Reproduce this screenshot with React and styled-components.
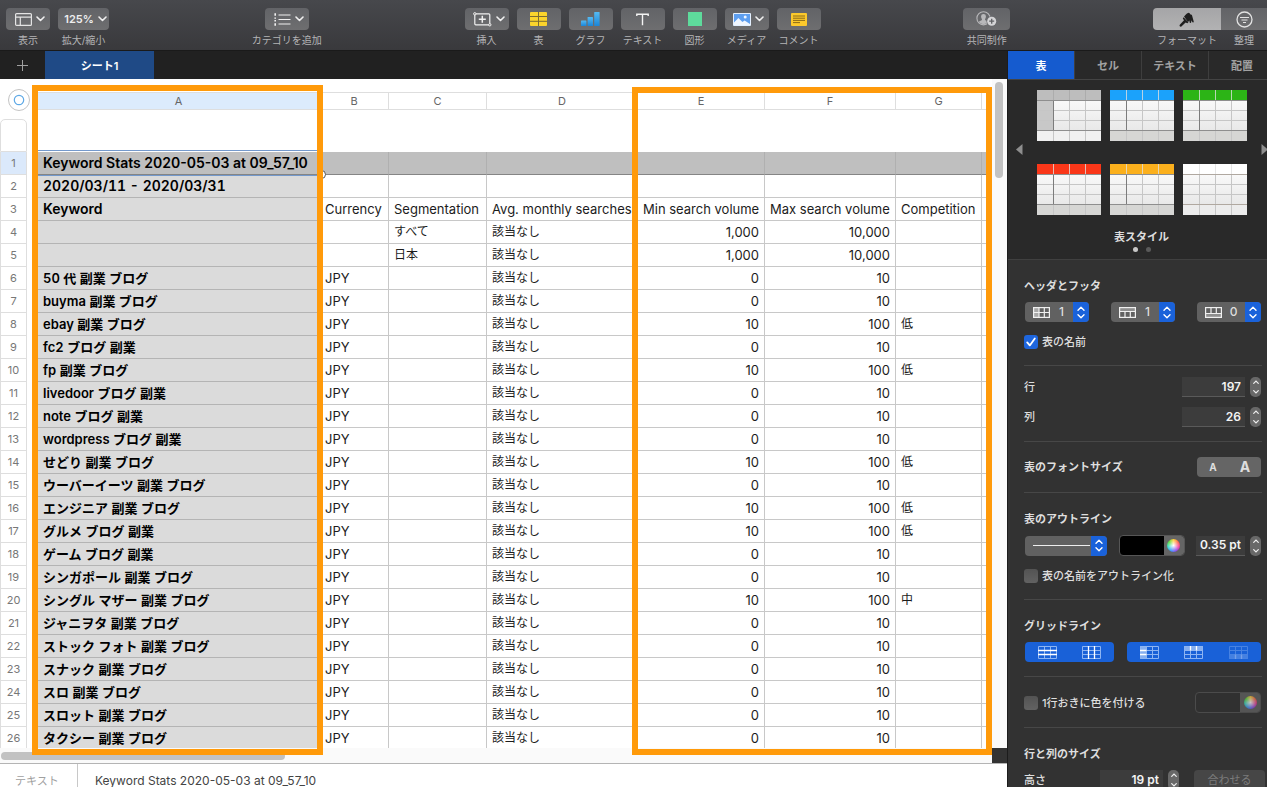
import React from 'react'
import styled, { createGlobalStyle, css } from 'styled-components'

const GlobalStyle = createGlobalStyle`
  * {
    box-sizing: border-box;
  }
  body {
    margin: 0;
    overflow: hidden;
    background: #ffffff;
    font-family: Inter, "Noto Sans CJK JP", sans-serif;
    font-size: 12px;
  }
  button, input, select {
    margin: 0;
    padding: 0;
    border: none;
    border-radius: 0;
    outline: none;
    background: none;
    color: inherit;
    font: inherit;
  }
  svg {
    display: block;
    flex-shrink: 0;
  }
`;

const Page = styled.div`
  display: flex;
  flex-direction: column;
  height: 100vh;
  overflow: hidden;
`;

/* toolbar */

const Toolbar = styled.header`
  display: flex;
  justify-content: space-between;
  align-items: flex-start;
  flex-shrink: 0;
  height: 51px;
  padding: 8px 0 0 6px;
  background: linear-gradient(#47484c, #39393c);
  border-bottom: 1px solid #1a1a1a;
`;

const ToolGroup = styled.div`
  display: flex;
  gap: ${props => props.$gap ?? 8}px;
`;

const ToolItem = styled.label`
  display: flex;
  flex-direction: column;
  align-items: center;
  gap: 2px;
  min-width: ${props => props.$width || 44}px;
  color: #b4b4b6;
  font-size: 10px;
  line-height: 16px;
  white-space: nowrap;
`;

const ToolButton = styled.button`
  display: flex;
  align-items: center;
  justify-content: center;
  gap: 4px;
  width: ${props => props.$width || 44}px;
  height: 22px;
  padding-left: ${props => props.$menu ? 4 : 0}px;
  border-radius: ${props => props.$radius || '4px'};
  background: ${props => props.$active ? 'linear-gradient(#a5a5a7, #b2b2b3)' : 'linear-gradient(#626367, #6e6e70)'};
  color: #eeeeee;
  font-size: 11px;
  font-weight: 600;
`;

/* main */

const Main = styled.div`
  display: flex;
  flex: 1;
  min-height: 0;
`;

const Document = styled.main`
  display: flex;
  flex-direction: column;
  flex: 1;
  min-width: 0;
  border-right: 1px solid #1c1c1c;
`;

const SheetTabs = styled.nav`
  display: flex;
  flex-shrink: 0;
  height: 28px;
  background: #212121;
`;

const AddSheet = styled.button`
  display: flex;
  align-items: center;
  justify-content: center;
  width: 45px;
  color: #a0a0a0;
`;

const SheetTab = styled.button`
  width: 109px;
  background: #1f4a86;
  color: #ffffff;
  font-size: 11px;
  font-weight: 600;
`;

const Canvas = styled.div`
  position: relative;
  display: flex;
  flex: 1;
  min-height: 0;
  overflow: hidden;
`;

const SheetColumn = styled.div`
  display: flex;
  flex-direction: column;
  flex: 1;
  min-width: 0;
`;

const SheetArea = styled.div`
  flex: 1;
  min-height: 0;
  padding-top: 13px;
  overflow: hidden;
  background: #ffffff;
`;

const Table = styled.table`
  width: 100%;
  table-layout: fixed;
  border-collapse: separate;
  border-spacing: 0;
  color: #1c1c1c;
  font-size: 13px;
`;

const Corner = styled.td`
  position: relative;
  height: 18px;
  padding: 0;
`;

const TableHandle = styled.button`
  position: absolute;
  top: -3px;
  left: 8px;
  display: flex;
  align-items: center;
  justify-content: center;
  width: 22px;
  height: 22px;
  border: 1px solid #c4c4c4;
  border-radius: 50%;
  background: #ffffff;
`;

const ColumnLetter = styled.th`
  height: 18px;
  padding: 0;
  border-top: 1px solid #dedede;
  border-bottom: 1px solid #dedede;
  border-right: 1px solid ${props => props.$selected ? '#ccdaea' : '#dedede'};
  background: ${props => props.$selected ? '#dcebfc' : '#ffffff'};
  color: #666666;
  font-size: 11px;
  line-height: 16px;
  font-weight: 400;
`;

const Gutter = styled.th`
  height: ${props => props.$spacer ? 42 : 23}px;
  padding: 0 11px 0 0;
  vertical-align: bottom;
  font-weight: 400;
`;

const GutterCell = styled.div`
  height: 23px;
  border: 1px solid #dedede;
  border-top: none;
  background: ${props => props.$selected ? '#dbe9fb' : '#ffffff'};
  color: #777777;
  font-size: 11px;
  line-height: 22px;
  text-align: center;
  ${props => props.$blank && css`
    height: 33px;
    border-top: 1px solid #dedede;
    border-radius: 5px 5px 0 0;
  `}
`;

const Cell = styled.td`
  height: 23px;
  padding: 0 5px;
  border-right: 1px solid #c8c8c8;
  border-bottom: 1px solid #c8c8c8;
  font-size: ${props => props.$size}px;
  line-height: 20px;
  white-space: nowrap;
  overflow: hidden;
  text-align: ${props => props.$number ? 'right' : 'left'};
  ${props => props.$head && css`
    border-color: #b4b4b4;
    background: #dbdbdb;
    color: #000000;
    font-weight: 600;
    font-variant-numeric: tabular-nums;
  `}
  ${props => props.$title && css`
    border-right-color: #b0b0b0;
    border-bottom-color: #858585;
    background: #bfbfbf;
    font-variant-numeric: normal;
  `}
  ${props => props.$selected && css`
    position: relative;
    z-index: 1;
    overflow: visible;
    &::before {
      content: '';
      position: absolute;
      right: -7px;
      bottom: -5px;
      width: 7px;
      height: 7px;
      border: 1px solid #555555;
      border-radius: 50%;
      background: #ffffff;
    }
    &::after {
      content: '';
      position: absolute;
      inset: -2px 0;
      border: solid #7499cc;
      border-width: 1px 0;
    }
  `}
`;

const Highlight = styled.div`
  position: absolute;
  z-index: 2;
  top: ${props => props.$top}px;
  left: ${props => props.$left}px;
  bottom: 8px;
  width: ${props => props.$width}px;
  border: 6px solid #ff9a0a;
  pointer-events: none;
`;

const HorizontalBar = styled.div`
  flex-shrink: 0;
  height: 15px;
  padding: 4px 1px;
  background: #fafafa;
`;

const HorizontalThumb = styled.div`
  width: 284px;
  height: 8px;
  border-radius: 4px;
  background: #c2c2c2;
`;

const VerticalBar = styled.div`
  display: flex;
  flex-direction: column;
  justify-content: space-between;
  width: 15px;
  padding-top: 3px;
  background: #fafafa;
`;

const VerticalThumb = styled.div`
  width: 8px;
  height: 96px;
  margin-left: 3px;
  border-radius: 4px;
  background: #c2c2c2;
`;

const BarCorner = styled.div`
  height: 15px;
  background: #333333;
`;

const Footer = styled.footer`
  display: flex;
  flex-shrink: 0;
  height: 24px;
  overflow: hidden;
  border-top: 1px solid #b4b4b4;
  background: #ffffff;
  line-height: 34px;
`;

const FooterKind = styled.span`
  width: 78px;
  padding-left: 15px;
  border-right: 1px solid #c8c8c8;
  color: #a0a0a0;
  font-size: 11px;
`;

const FooterText = styled.span`
  padding-left: 17px;
  color: #444444;
`;

/* inspector */

const Inspector = styled.aside`
  display: flex;
  flex-direction: column;
  flex-shrink: 0;
  width: 259px;
  overflow: hidden;
  background: #323232;
  color: #dedede;
  font-size: 11px;
`;

const InspectorTabs = styled.div`
  display: flex;
  flex-shrink: 0;
  height: 29px;
  border-bottom: 1px solid #444444;
  background: #292929;
`;

const InspectorTab = styled.button`
  flex: 0 0 67px;
  border-right: 1px solid #3e3e3e;
  background: ${props => props.$active ? '#155bcf' : 'none'};
  color: ${props => props.$active ? '#ffffff' : '#a2a2a2'};
  font-weight: 600;
`;

const StylePane = styled.div`
  flex-shrink: 0;
  height: 180px;
  padding-top: 10px;
  border-bottom: 1px solid #404040;
  background: #292929;
`;

const StyleRow = styled.div`
  display: flex;
  align-items: center;
  gap: 14px;
  padding-left: 8px;
`;

const StyleGrid = styled.div`
  display: grid;
  flex-shrink: 0;
  grid-template-columns: repeat(3, 64px);
  gap: 23px 9px;
`;

const IconButton = styled.button`
  display: block;
`;

const PageArrow = styled.button`
  padding-bottom: 6px;
`;

const StyleTitle = styled.h2`
  margin: 12px 0 0 8px;
  font-size: 11px;
  line-height: 20px;
  font-weight: 600;
  text-align: center;
`;

const Dots = styled.div`
  display: flex;
  justify-content: center;
  gap: 8px;
  margin-left: 9px;
`;

const Dot = styled.span`
  width: 5px;
  height: 5px;
  border-radius: 50%;
  background: ${props => props.$on ? '#c8c8c8' : '#5a5a5a'};
`;

const Section = styled.section`
  display: flex;
  flex-direction: column;
  flex-shrink: 0;
  gap: ${props => props.$gap || 6}px;
  margin: 0 5px 0 16px;
  padding: ${props => props.$padding};
  border-bottom: 1px solid #474747;
`;

const Heading = styled.h3`
  margin: 0;
  font-size: 11px;
  line-height: 20px;
  font-weight: 600;
`;

const Row = styled.div`
  display: flex;
  align-items: center;
  justify-content: space-between;
  min-height: 20px;
  margin-right: ${props => props.$wide ? -4 : 0}px;
  padding-top: ${props => props.$spaced ? 4 : 0}px;
  padding-left: ${props => props.$inset ? 1 : 0}px;
  padding-right: 1px;
  line-height: 20px;
`;

const Label = styled.label`
  display: flex;
  align-items: center;
  gap: 4px;
  line-height: 20px;
  font-weight: 500;
`;

const Check = styled.input`
  appearance: none;
  width: 14px;
  height: 14px;
  border-radius: 3px;
  background: linear-gradient(#535353, #626262);
  &:checked {
    background: #1e66de url("data:image/svg+xml,%3Csvg xmlns='http://www.w3.org/2000/svg' viewBox='0 0 14 14'%3E%3Cpath d='M3.2 7.4l2.6 3 5-7' fill='none' stroke='white' stroke-width='1.8' stroke-linecap='round' stroke-linejoin='round'/%3E%3C/svg%3E");
  }
`;

const Popup = styled.div`
  display: flex;
  align-items: center;
  width: ${props => props.$width}px;
  height: 20px;
  padding-left: 8px;
  overflow: hidden;
  border-radius: 4px;
  background: #616161;
`;

const Select = styled.select`
  appearance: none;
  flex: 1;
  min-width: 0;
  text-align: center;
  font-size: 12px;
  font-weight: 500;
`;

const PopupCap = styled.span`
  display: flex;
  align-items: center;
  justify-content: center;
  width: 16px;
  height: 20px;
  background: #1a62da;
  pointer-events: none;
`;

const NumberField = styled.div`
  display: flex;
  align-items: center;
  gap: 5px;
`;

const NumberInput = styled.input`
  width: ${props => props.$width || 63}px;
  height: 20px;
  padding-right: 4px;
  border-bottom: 1px solid #5a5a5a;
  background: #3c3c3c;
  color: #f4f4f4;
  font-size: 12px;
  font-weight: 600;
  text-align: right;
`;

const StepperBox = styled.span`
  display: flex;
  flex-direction: column;
  width: 11px;
  height: 20px;
  overflow: hidden;
  border-radius: 5px;
  background: #686868;
`;

const StepButton = styled.button`
  display: flex;
  align-items: center;
  justify-content: center;
  height: 10px;
`;

const Segmented = styled.div`
  display: flex;
  height: 20px;
  overflow: hidden;
  border-radius: 4px;
  background: ${props => props.$blue ? '#1961d8' : '#656565'};
`;

const Segment = styled.button`
  display: flex;
  align-items: center;
  justify-content: center;
  width: ${props => props.$width}px;
  font-size: ${props => props.$size || 12}px;
  font-weight: 700;
  & + & {
    border-left: ${props => props.$divided ? '1px solid #4c4c4c' : 'none'};
  }
`;

const ColorWell = styled.button`
  display: flex;
  width: 66px;
  height: 21px;
  overflow: hidden;
  border: 1px solid #565656;
  border-radius: 4px;
  background: ${props => props.$color};
  opacity: ${props => props.disabled ? 0.7 : 1};
`;

const WheelBox = styled.span`
  display: flex;
  align-items: center;
  justify-content: center;
  width: 20px;
  height: 19px;
  margin-left: auto;
  background: #656565;
`;

const Wheel = styled.span`
  width: 13px;
  height: 13px;
  border-radius: 50%;
  background:
    radial-gradient(#ffffff, #ffffff00 65%),
    conic-gradient(#ffd23c, #ff6a4a, #f03ca0, #8a50f0, #3c96ff, #3cdcc8, #5ae03c, #ffd23c);
`;

const FitButton = styled.button`
  width: 71px;
  height: 20px;
  margin-left: 10px;
  border-radius: 4px;
  background: #464646;
  color: #7c7c7c;
`;

/* icons */

const Chevron = () => (
  <svg width="9" height="6" viewBox="0 0 9 6" fill="none" stroke="#f0f0f0" strokeWidth="1.6" strokeLinecap="round" strokeLinejoin="round">
    <path d="M1 1l3.5 3.5L8 1" />
  </svg>
);

const ViewIcon = () => (
  <svg width="17" height="13" viewBox="0 0 17 13" fill="none" stroke="#e4e4e4">
    <rect x=".6" y=".6" width="15.8" height="11.8" rx="1" strokeWidth="1.2" />
    <path d="M1 4.2h15M5.3 4.2v8" strokeWidth="1.2" />
  </svg>
);

const CategoryIcon = () => (
  <svg width="17" height="13" viewBox="0 0 17 13" stroke="#f0f0f0" strokeWidth="1.2">
    <path d="M4.5 2h12M4.5 6.5h12M4.5 11h12" />
    <path d="M1.2 .2v2.6M1.2 4.4v1.4M1.2 7v1.4M1.2 10.2v2.6" strokeWidth="1.6" />
  </svg>
);

const InsertIcon = () => (
  <svg width="19" height="15" viewBox="0 0 19 15" fill="none" stroke="#f0f0f0">
    <rect x="1.8" y="1.8" width="15" height="11" rx="1" strokeWidth="1.2" />
    <path d="M9.3 3.8v7M5.8 7.3h7" strokeWidth="1.5" />
    <circle cx="1.8" cy="1.8" r="1.2" fill="#707072" />
    <circle cx="16.8" cy="12.8" r="1.2" fill="#707072" />
  </svg>
);

const TableIcon = () => (
  <svg width="17" height="14" viewBox="0 0 17 14">
    <rect width="17" height="14" rx="1" fill="#fbd42c" />
    <path d="M0 4.5h17M0 9.3h17M8.5 0v14" stroke="#7b6b32" />
  </svg>
);

const ChartIcon = () => (
  <svg width="19" height="14" viewBox="0 0 19 14">
    <defs>
      <linearGradient id="bars" x2="0" y2="1">
        <stop stopColor="#55baf2" />
        <stop offset="1" stopColor="#1a85d8" />
      </linearGradient>
    </defs>
    <rect y="8.5" width="5.4" height="5.5" rx=".6" fill="url(#bars)" />
    <rect x="6.6" y="5" width="5.4" height="9" rx=".6" fill="url(#bars)" />
    <rect x="13.2" width="5.4" height="14" rx=".6" fill="url(#bars)" />
  </svg>
);

const TextIcon = () => (
  <svg width="13" height="13" viewBox="0 0 13 13" fill="none" stroke="#f4f4f4" strokeWidth="1.4">
    <path d="M.8 3V1.2h11.4V3M6.5 1.2v11" />
  </svg>
);

const ShapeIcon = () => (
  <svg width="14" height="14" viewBox="0 0 14 14">
    <rect width="14" height="14" fill="#5edb9c" />
  </svg>
);

const MediaIcon = () => (
  <svg width="18" height="13" viewBox="0 0 18 13">
    <rect width="18" height="13" rx="1" fill="#e4f0ff" />
    <rect x="1" y="1" width="16" height="11" fill="#5e9ff0" />
    <path d="M1 12V9.5L5.4 5l4 4 2.2-1.6L17 11v1z" fill="#f0f6ff" />
    <circle cx="12.2" cy="4" r="1.5" fill="#f0f6ff" />
  </svg>
);

const CommentIcon = () => (
  <svg width="16" height="13" viewBox="0 0 16 13">
    <rect width="16" height="13" rx="1" fill="#fcc92c" />
    <path d="M2 3h12M2 5.2h12M2 7.4h12M2 9.6h7" stroke="#8a6a18" />
  </svg>
);

const CollabIcon = () => (
  <svg width="21" height="16" viewBox="0 0 21 16">
    <circle cx="7.5" cy="7.3" r="6.6" fill="none" stroke="#b8b8ba" strokeWidth="1.1" />
    <path d="M7.5 3a2.4 2.4 0 0 1 2.4 2.6c0 1.4-.7 2-.9 2.8 0 1.2 2.6 1 3.2 2.7a6.4 6.4 0 0 1-9.4 0c.6-1.7 3.2-1.5 3.2-2.7-.2-.8-.9-1.4-.9-2.8A2.4 2.4 0 0 1 7.5 3z" fill="#b8b8ba" />
    <circle cx="15.7" cy="10.2" r="5.2" fill="#6a6b6e" />
    <circle cx="15.7" cy="10.2" r="4.5" fill="#d4d4d6" />
    <path d="M15.7 7.7v5M13.2 10.2h5" stroke="#606164" strokeWidth="1.3" />
  </svg>
);

const BrushIcon = () => (
  <svg width="16" height="15" viewBox="0 0 16 15" fill="#1e1e1e">
    <path d="M5 4.5C6.5 3.5 7 1.2 9.5.7c1 0 1.5.8 1.6 1.6 1.2 0 2 .7 2.1 1.8l1.5 5.4c.2 1.3-1.3 1.5-1.5.3l-.8-1.6-.2 2c-.2 1-1.5.9-1.6 0L10.4 8.6 9 10z" />
    <path d="M4.6 5.2l4.8 5-1 1-1.8-.7-4.2 3.9c-1.2.8-2.4-.5-1.6-1.6L5 8.3 3.8 6.6z" />
  </svg>
);

const OrganizeIcon = () => (
  <svg width="17" height="17" viewBox="0 0 17 17" fill="none" stroke="#e2e2e2">
    <circle cx="8.5" cy="8.5" r="7.5" strokeWidth="1.3" />
    <path d="M4 6.5h9M5.5 9h6M7 11.5h3" strokeWidth="1.2" />
  </svg>
);

const PlusIcon = () => (
  <svg width="11" height="11" viewBox="0 0 11 11" stroke="currentColor">
    <path d="M5.5 0v11M0 5.5h11" />
  </svg>
);

const UpDown = () => (
  <svg width="8" height="13" viewBox="0 0 8 13" fill="none" stroke="#ffffff" strokeWidth="1.4" strokeLinecap="round" strokeLinejoin="round">
    <path d="M1 4.2l3-3 3 3M1 8.8l3 3 3-3" />
  </svg>
);

const StepArrow = ({ down }) => (
  <svg width="6" height="4" viewBox="0 0 6 4" fill="none" stroke="#eeeeee" strokeWidth="1.2" strokeLinecap="round">
    <path d={down ? 'M.7 .7L3 3 5.3 .7' : 'M.7 3.3L3 1l2.3 2.3'} />
  </svg>
);

const HeaderIcon = ({ kind }) => (
  <svg width="17" height="11" viewBox="0 0 17 11" fill="none" stroke="#f0f0f0" strokeWidth="1.2">
    {kind === 'column' && <rect width="6" height="11" fill="#a8a8a8" stroke="none" />}
    {kind === 'row' && <rect width="17" height="5" fill="#8e8e8e" stroke="none" />}
    {kind === 'footer' && <rect y="6" width="17" height="5" fill="#8e8e8e" stroke="none" />}
    <rect x=".6" y=".6" width="15.8" height="9.8" />
    {kind === 'column' && <path d="M0 5.5h17M6 0v11M11.3 0v11" />}
    {kind === 'row' && <path d="M0 4.5h17M6 4.5V11M11.3 4.5V11" />}
    {kind === 'footer' && <path d="M0 6.5h17M6 0v6.5M11.3 0v6.5" />}
  </svg>
);

const gridStrokes = {
  rows: 'M0 4.5h19M0 8.5h19',
  columns: 'M6.5 0v13M12.5 0v13',
  headColumn: 'M0 4.5h6.5M0 8.5h6.5',
  headRow: 'M6.5 0v4.5M12.5 0v4.5',
  footer: 'M6.5 8.5V13M12.5 8.5V13',
};

const GridIcon = ({ kind }) => (
  <svg width="19" height="13" viewBox="0 0 19 13" fill="none" opacity={kind === 'footer' ? 0.4 : 1}>
    {kind === 'headColumn' && <rect width="6.5" height="13" fill="#86aff0" />}
    {kind === 'headRow' && <rect width="19" height="4.5" fill="#86aff0" />}
    {kind === 'footer' && <rect y="8.5" width="19" height="4.5" fill="#86aff0" />}
    <path d="M.5 .5h18v12H.5zM0 4.5h19M0 8.5h19M6.5 0v13M12.5 0v13" stroke="#8db4f2" />
    <path d={gridStrokes[kind]} stroke="#ffffff" strokeWidth="1.3" />
  </svg>
);

const Triangle = ({ right }) => (
  <svg width="7" height="11" viewBox="0 0 7 11" fill="#8e8e8e">
    <path d={right ? 'M.5 0L7 5.5 .5 11z' : 'M6.5 0L0 5.5 6.5 11z'} />
  </svg>
);

const StyleThumb = ({ id, header, side, foot, rule }) => (
  <svg width="64" height="51" viewBox="0 0 64 51">
    <defs>
      <linearGradient id={id} x2="0" y2="1">
        <stop stopColor="#ffffff" />
        <stop offset="1" stopColor="#e2e2e2" />
      </linearGradient>
    </defs>
    <rect width="64" height="51" fill={`url(#${id})`} />
    {side && <rect y="10" width="16" height="31" fill={side} />}
    <rect y="41" width="64" height="10" fill={foot} />
    <path d="M0 20.5h64M0 30.5h64M16.5 10v41M32.5 10v41M48.5 10v41" stroke="#c6c6c6" />
    <rect width="64" height="10" fill={header} />
    <path d="M16.5 0v10M32.5 0v10M48.5 0v10" stroke={side ? '#a8a8a8' : '#dedede'} strokeOpacity=".8" />
    {rule && <path d="M16.5 10v31" stroke="#7c7c7c" />}
    <path d="M0 10.5h64M0 40.5h64" stroke={rule ? '#8e8e8e' : '#b0a8a0'} />
  </svg>
);

const Stepper = ({ label }) => (
  <StepperBox>
    <StepButton aria-label={`${label} +`}><StepArrow /></StepButton>
    <StepButton aria-label={`${label} -`}><StepArrow down /></StepButton>
  </StepperBox>
);

/* data */

const insertTools = [
  { label: '挿入', icon: <InsertIcon />, menu: true },
  { label: '表', icon: <TableIcon /> },
  { label: 'グラフ', icon: <ChartIcon /> },
  { label: 'テキスト', icon: <TextIcon /> },
  { label: '図形', icon: <ShapeIcon /> },
  { label: 'メディア', icon: <MediaIcon />, menu: true },
  { label: 'コメント', icon: <CommentIcon /> },
];

const columns = [
  { letter: 'A', width: 282 },
  { letter: 'B', width: 69 },
  { letter: 'C', width: 98 },
  { letter: 'D', width: 151 },
  { letter: 'E', width: 127 },
  { letter: 'F', width: 131 },
  { letter: 'G', width: 86 },
  { letter: '' },
];

const keyword = (name, level) => [
  name, 'JPY', '', '該当なし', level ? '10' : '0', level ? '100' : '10', level || '', '',
];

const rows = [
  ['Keyword Stats 2020-05-03 at 09_57_10', '', '', '', '', '', '', ''],
  ['2020/03/11 - 2020/03/31', '', '', '', '', '', '', ''],
  ['Keyword', 'Currency', 'Segmentation', 'Avg. monthly searches', 'Min search volume', 'Max search volume', 'Competition', ''],
  ['', '', 'すべて', '該当なし', '1,000', '10,000', '', ''],
  ['', '', '日本', '該当なし', '1,000', '10,000', '', ''],
  keyword('50 代 副業 ブログ'),
  keyword('buyma 副業 ブログ'),
  keyword('ebay 副業 ブログ', '低'),
  keyword('fc2 ブログ 副業'),
  keyword('fp 副業 ブログ', '低'),
  keyword('livedoor ブログ 副業'),
  keyword('note ブログ 副業'),
  keyword('wordpress ブログ 副業'),
  keyword('せどり 副業 ブログ', '低'),
  keyword('ウーバーイーツ 副業 ブログ'),
  keyword('エンジニア 副業 ブログ', '低'),
  keyword('グルメ ブログ 副業', '低'),
  keyword('ゲーム ブログ 副業'),
  keyword('シンガポール 副業 ブログ'),
  keyword('シングル マザー 副業 ブログ', '中'),
  keyword('ジャニヲタ 副業 ブログ'),
  keyword('ストック フォト 副業 ブログ'),
  keyword('スナック 副業 ブログ'),
  keyword('スロ 副業 ブログ'),
  keyword('スロット 副業 ブログ'),
  keyword('タクシー 副業 ブログ'),
];

const tableStyles = [
  { id: 'gray', header: '#bdbdbd', side: '#c8c8c8', foot: '#f0f0f0', rule: true },
  { id: 'blue', header: '#1ba2fb', foot: '#d6d6d4', rule: true },
  { id: 'green', header: '#2cb416', foot: '#d6d6d4', rule: true },
  { id: 'red', header: '#fa3719', foot: '#d6d6d4', rule: true },
  { id: 'orange', header: '#fbb01d', foot: '#d6d6d4', rule: true },
  { id: 'plain', header: '#ffffff', foot: '#ececec' },
];

const headerPopups = [
  { kind: 'column', label: 'ヘッダ列', value: 1 },
  { kind: 'row', label: 'ヘッダ行', value: 1 },
  { kind: 'footer', label: 'フッタ', value: 0 },
];

// labels of the first column are larger, short japanese values smaller
const cellSize = (r, c) => {
  if (c === 0) return r < 3 ? 14 : 13;
  return r > 2 && [2, 3, 6].includes(c) ? 12 : 13;
};

const TopBar = () => (
  <Toolbar>
    <ToolGroup>
      <ToolItem>
        <ToolButton $menu><ViewIcon /><Chevron /></ToolButton>
        表示
      </ToolItem>
      <ToolItem $width={51}>
        <ToolButton $width={51} $menu>125%<Chevron /></ToolButton>
        拡大/縮小
      </ToolItem>
    </ToolGroup>
    <ToolItem>
      <ToolButton $menu><CategoryIcon /><Chevron /></ToolButton>
      カテゴリを追加
    </ToolItem>
    <ToolGroup>
      {insertTools.map(tool => (
        <ToolItem key={tool.label}>
          <ToolButton $menu={tool.menu}>{tool.icon}{tool.menu && <Chevron />}</ToolButton>
          {tool.label}
        </ToolItem>
      ))}
    </ToolGroup>
    <ToolItem>
      <ToolButton $width={47}><CollabIcon /></ToolButton>
      共同制作
    </ToolItem>
    <ToolGroup $gap={0}>
      <ToolItem>
        <ToolButton $width={68} $radius="4px 0 0 4px" $active><BrushIcon /></ToolButton>
        フォーマット
      </ToolItem>
      <ToolItem>
        <ToolButton $width={46} $radius="0"><OrganizeIcon /></ToolButton>
        整理
      </ToolItem>
    </ToolGroup>
  </Toolbar>
);

const Spreadsheet = () => (
  <Table>
    <colgroup>
      <col width="38" />
      {columns.map((col, i) => <col key={i} width={col.width} />)}
    </colgroup>
    <thead>
      <tr>
        <Corner>
          <TableHandle aria-label="表">
            <svg width="12" height="12" viewBox="0 0 12 12">
              <circle cx="6" cy="6" r="4.7" fill="none" stroke="#5fa9e6" strokeWidth="1.2" />
            </svg>
          </TableHandle>
        </Corner>
        {columns.map((col, i) => (
          <ColumnLetter key={i} scope="col" $selected={i === 0}>{col.letter}</ColumnLetter>
        ))}
      </tr>
    </thead>
    <tbody>
      <tr>
        <Gutter $spacer><GutterCell $blank /></Gutter>
      </tr>
      {rows.map((row, r) => (
        <tr key={r}>
          <Gutter scope="row"><GutterCell $selected={r === 0}>{r + 1}</GutterCell></Gutter>
          {row.map((value, c) => (
            <Cell
              key={c}
              $size={cellSize(r, c)}
              $head={c === 0}
              $title={r === 0}
              $selected={r === 0 && c === 0}
              $number={r > 2 && (c === 4 || c === 5)}
            >
              {value}
            </Cell>
          ))}
        </tr>
      ))}
    </tbody>
  </Table>
);

const FormatPanel = () => (
  <Inspector>
    <InspectorTabs>
      <InspectorTab $active>表</InspectorTab>
      <InspectorTab>セル</InspectorTab>
      <InspectorTab>テキスト</InspectorTab>
      <InspectorTab>配置</InspectorTab>
    </InspectorTabs>

    <StylePane>
      <StyleRow>
        <PageArrow aria-label="前へ"><Triangle /></PageArrow>
        <StyleGrid>
          {tableStyles.map(style => (
            <IconButton key={style.id} aria-label={style.id}><StyleThumb {...style} /></IconButton>
          ))}
        </StyleGrid>
        <PageArrow aria-label="次へ"><Triangle right /></PageArrow>
      </StyleRow>
      <StyleTitle>表スタイル</StyleTitle>
      <Dots><Dot $on /><Dot /></Dots>
    </StylePane>

    <Section $padding="16px 0 13px">
      <Heading>ヘッダとフッタ</Heading>
      <Row $inset>
        {headerPopups.map(popup => (
          <Popup key={popup.kind} $width={64}>
            <HeaderIcon kind={popup.kind} />
            <Select aria-label={popup.label} defaultValue={popup.value}>
              <option>{popup.value}</option>
            </Select>
            <PopupCap><UpDown /></PopupCap>
          </Popup>
        ))}
      </Row>
      <Row $spaced>
        <Label><Check type="checkbox" defaultChecked />表の名前</Label>
      </Row>
    </Section>

    <Section $padding="11px 0 14px" $gap={10}>
      <Row>
        <Label htmlFor="rows">行</Label>
        <NumberField>
          <NumberInput id="rows" defaultValue="197" />
          <Stepper label="行" />
        </NumberField>
      </Row>
      <Row>
        <Label htmlFor="columns">列</Label>
        <NumberField>
          <NumberInput id="columns" defaultValue="26" />
          <Stepper label="列" />
        </NumberField>
      </Row>
    </Section>

    <Section $padding="15px 0">
      <Row>
        <Heading>表のフォントサイズ</Heading>
        <Segmented>
          <Segment $width={32} $size={10} $divided>A</Segment>
          <Segment $width={32} $size={14} $divided>A</Segment>
        </Segmented>
      </Row>
    </Section>

    <Section $padding="16px 0 13px">
      <Heading>表のアウトライン</Heading>
      <Row $inset>
        <Popup $width={82}>
          <svg width="57" height="2"><rect width="57" height="1" fill="#eeeeee" /></svg>
          <Select aria-label="線の種類"><option></option></Select>
          <PopupCap><UpDown /></PopupCap>
        </Popup>
        <ColorWell $color="#000000" aria-label="線の色"><WheelBox><Wheel /></WheelBox></ColorWell>
        <NumberField>
          <NumberInput $width={49} aria-label="線の幅" defaultValue="0.35 pt" />
          <Stepper label="線の幅" />
        </NumberField>
      </Row>
      <Row $spaced>
        <Label><Check type="checkbox" />表の名前をアウトライン化</Label>
      </Row>
    </Section>

    <Section $padding="16px 0 14px">
      <Heading>グリッドライン</Heading>
      <Row $inset>
        <Segmented $blue>
          <Segment $width={44} aria-label="本文の行"><GridIcon kind="rows" /></Segment>
          <Segment $width={45} aria-label="本文の列"><GridIcon kind="columns" /></Segment>
        </Segmented>
        <Segmented $blue>
          <Segment $width={44} aria-label="ヘッダ列"><GridIcon kind="headColumn" /></Segment>
          <Segment $width={45} aria-label="ヘッダ行"><GridIcon kind="headRow" /></Segment>
          <Segment $width={45} aria-label="フッタ"><GridIcon kind="footer" /></Segment>
        </Segmented>
      </Row>
    </Section>

    <Section $padding="15px 0 14px">
      <Row>
        <Label><Check type="checkbox" />1行おきに色を付ける</Label>
        <ColorWell $color="#303030" aria-label="行の色" disabled><WheelBox><Wheel /></WheelBox></ColorWell>
      </Row>
    </Section>

    <Section $padding="16px 0">
      <Heading>行と列のサイズ</Heading>
      <Row $wide>
        <Label htmlFor="height">高さ</Label>
        <NumberField>
          <NumberInput id="height" defaultValue="19 pt" />
          <Stepper label="高さ" />
          <FitButton disabled>合わせる</FitButton>
        </NumberField>
      </Row>
    </Section>
  </Inspector>
);

const App = () => {
  return (
    <Page>
      <GlobalStyle />
      <TopBar />
      <Main>
        <Document>
          <SheetTabs>
            <AddSheet aria-label="シートを追加"><PlusIcon /></AddSheet>
            <SheetTab>シート1</SheetTab>
          </SheetTabs>
          <Canvas>
            <SheetColumn>
              <SheetArea><Spreadsheet /></SheetArea>
              <HorizontalBar><HorizontalThumb /></HorizontalBar>
            </SheetColumn>
            <VerticalBar>
              <VerticalThumb />
              <BarCorner />
            </VerticalBar>
            <Highlight $top={6} $left={32} $width={291} />
            <Highlight $top={8} $left={632} $width={360} />
          </Canvas>
          <Footer>
            <FooterKind>テキスト</FooterKind>
            <FooterText>Keyword Stats 2020-05-03 at 09_57_10</FooterText>
          </Footer>
        </Document>
        <FormatPanel />
      </Main>
    </Page>
  )
}

export default App
